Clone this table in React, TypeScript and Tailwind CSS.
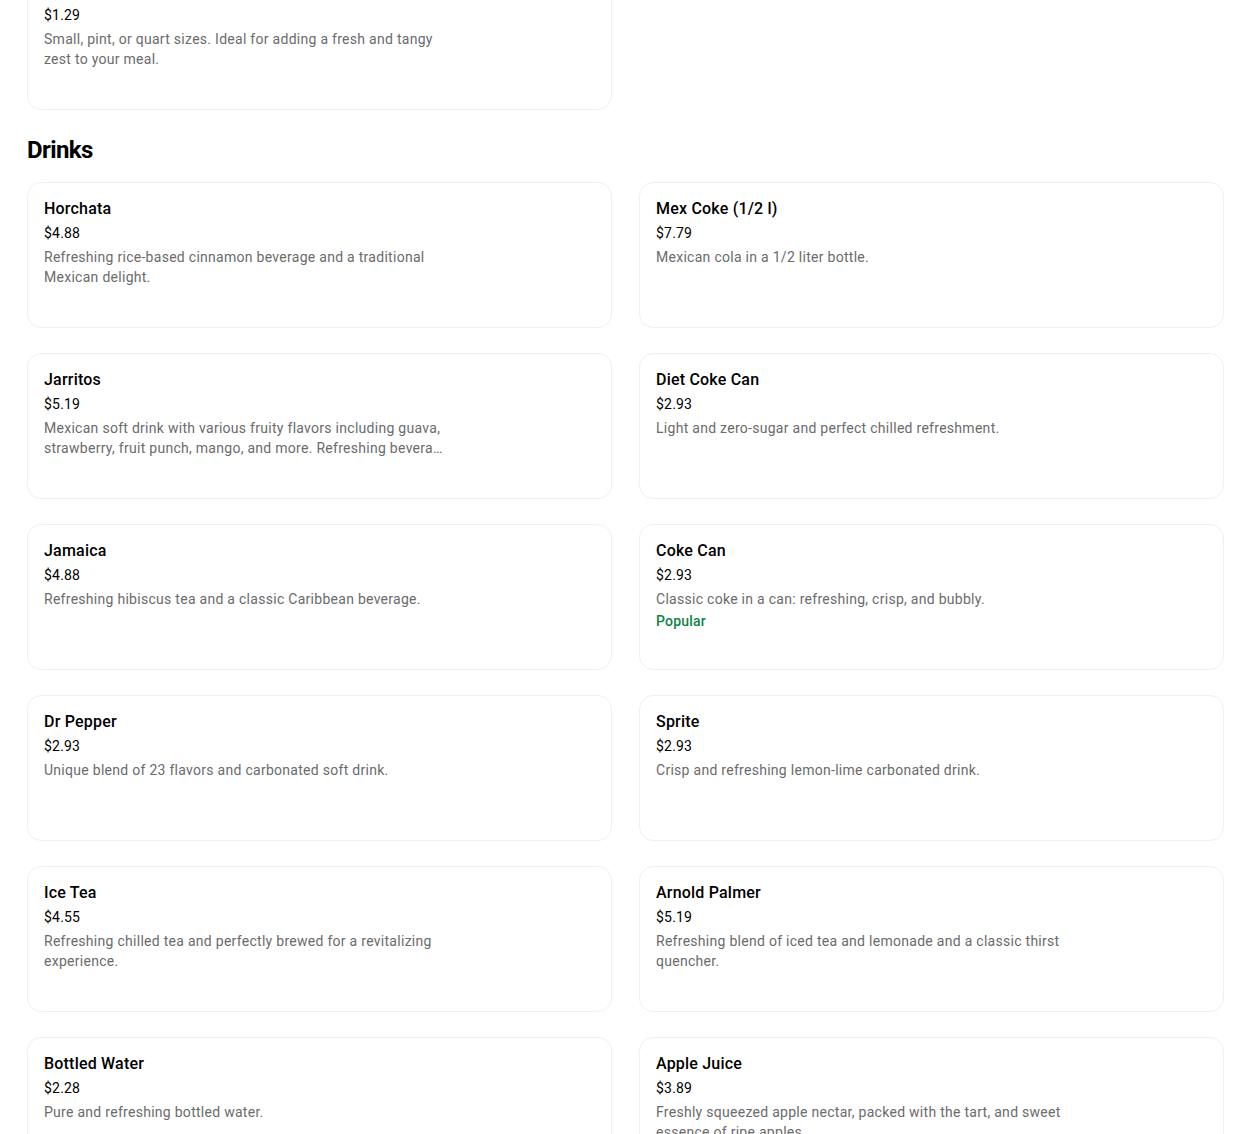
interface Item {
  name: string
  price: string
  description: string
  popular?: boolean
}

const drinks: Item[] = [
  { name: 'Horchata', price: '$4.88', description: 'Refreshing rice-based cinnamon beverage and a traditional Mexican delight.' },
  { name: 'Mex Coke (1/2 l)', price: '$7.79', description: 'Mexican cola in a 1/2 liter bottle.' },
  {
    name: 'Jarritos',
    price: '$5.19',
    description:
      'Mexican soft drink with various fruity flavors including guava, strawberry, fruit punch, mango, and more. Refreshing beverage with a natural taste.',
  },
  { name: 'Diet Coke Can', price: '$2.93', description: 'Light and zero-sugar and perfect chilled refreshment.' },
  { name: 'Jamaica', price: '$4.88', description: 'Refreshing hibiscus tea and a classic Caribbean beverage.' },
  { name: 'Coke Can', price: '$2.93', description: 'Classic coke in a can: refreshing, crisp, and bubbly.', popular: true },
  { name: 'Dr Pepper', price: '$2.93', description: 'Unique blend of 23 flavors and carbonated soft drink.' },
  { name: 'Sprite', price: '$2.93', description: 'Crisp and refreshing lemon-lime carbonated drink.' },
  { name: 'Ice Tea', price: '$4.55', description: 'Refreshing chilled tea and perfectly brewed for a revitalizing experience.' },
  { name: 'Arnold Palmer', price: '$5.19', description: 'Refreshing blend of iced tea and lemonade and a classic thirst quencher.' },
  { name: 'Bottled Water', price: '$2.28', description: 'Pure and refreshing bottled water.' },
  { name: 'Apple Juice', price: '$3.89', description: 'Freshly squeezed apple nectar, packed with the tart, and sweet essence of ripe apples.' },
]

function MenuCard({ item }: { item: Item }) {
  return (
    <div className="min-h-[146px] rounded-[14px] border border-[#f0f0f0] bg-white px-4 pt-[14px] pb-4">
      <div className="text-base leading-6 font-medium tracking-[0.2px] text-black">{item.name}</div>
      <div className="mt-[2px] text-sm leading-5 tracking-[0.2px] text-black">{item.price}</div>
      <p className="mt-1 max-w-[405px] text-sm leading-5 tracking-[0.28px] text-[#6b6b6b] line-clamp-2">
        {item.description}
      </p>
      {item.popular && (
        <div className="mt-[2px] text-sm leading-5 font-medium tracking-[0.2px] text-[#0e8345]">Popular</div>
      )}
    </div>
  )
}

export default function App() {
  return (
    <div className="min-h-screen bg-white pl-[27px] pr-[26px] font-['Roboto',sans-serif] overflow-hidden">
      <div className="-mt-[36px] pb-10">
        {/* previous section, scrolled past */}
        <div className="grid grid-cols-2 gap-x-[27px]">
          <MenuCard
            item={{ name: 'Salsa', price: '$1.29', description: 'Small, pint, or quart sizes. Ideal for adding a fresh and tangy zest to your meal.' }}
          />
        </div>

        <h2 className="mt-[24px] mb-[16px] text-2xl leading-8 font-bold tracking-tight text-black">Drinks</h2>
        <div className="grid grid-cols-2 gap-x-[27px] gap-y-[25px]">
          {drinks.map(d => (
            <MenuCard key={d.name} item={d} />
          ))}
        </div>
      </div>
    </div>
  )
}
